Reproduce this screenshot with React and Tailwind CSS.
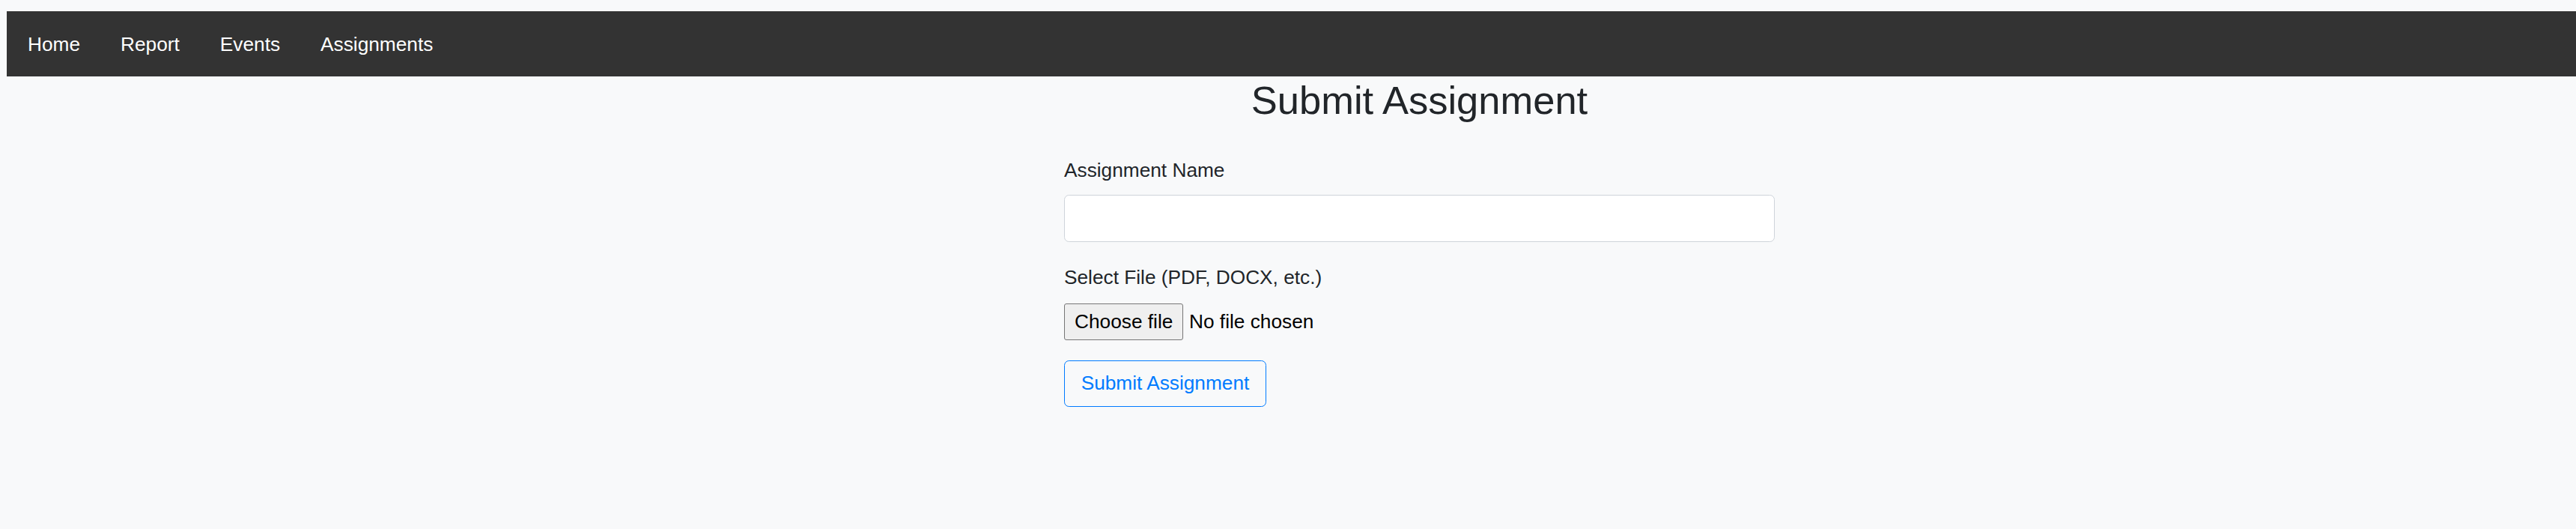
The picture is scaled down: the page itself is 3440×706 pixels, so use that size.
export default function App() {
  const font = { fontFamily: '"Liberation Sans", Arial, sans-serif' };
  return (
    <div className="min-h-screen bg-[#f8f9fa] pt-[15px] pl-[9px] text-[#212529]" style={font}>
      <nav className="h-[87px] bg-[#333333] flex items-center pl-px">
        {["Home", "Report", "Events", "Assignments"].map((l) => (
          <a key={l} className="px-[27px] text-white text-[26.25px] leading-none pt-[2px]">
            {l}
          </a>
        ))}
      </nav>
      <div className="ml-[1412px] w-[949px] flex flex-col">
        <h2 className="text-center text-[52.5px] leading-[1.2] font-normal text-[#212529]">
          Submit Assignment
        </h2>
        <label className="mt-[43px] text-[26.25px] leading-[1.5]">Assignment Name</label>
        <div className="mt-[13px] h-[63px] bg-white border border-[#ced4da] rounded-[6.5px]" />
        <label className="mt-[28px] text-[26.25px] leading-[1.5]">Select File (PDF, DOCX, etc.)</label>
        <div className="mt-[14px] flex items-center">
          <div className="h-[49px] w-[159px] flex items-center pl-[13px] bg-[#efefef] border border-[#767676] rounded-[3px] text-[26.25px] text-black">
            Choose file
          </div>
          <span className="ml-[8px] text-[26.25px] text-black">No file chosen</span>
        </div>
        <div className="mt-[27px]">
          <div className="h-[62px] w-[270px] flex items-center justify-center border border-[#007bff] rounded-[6.5px] text-[#007bff] text-[26.25px]">
            Submit Assignment
          </div>
        </div>
      </div>
    </div>
  );
}
